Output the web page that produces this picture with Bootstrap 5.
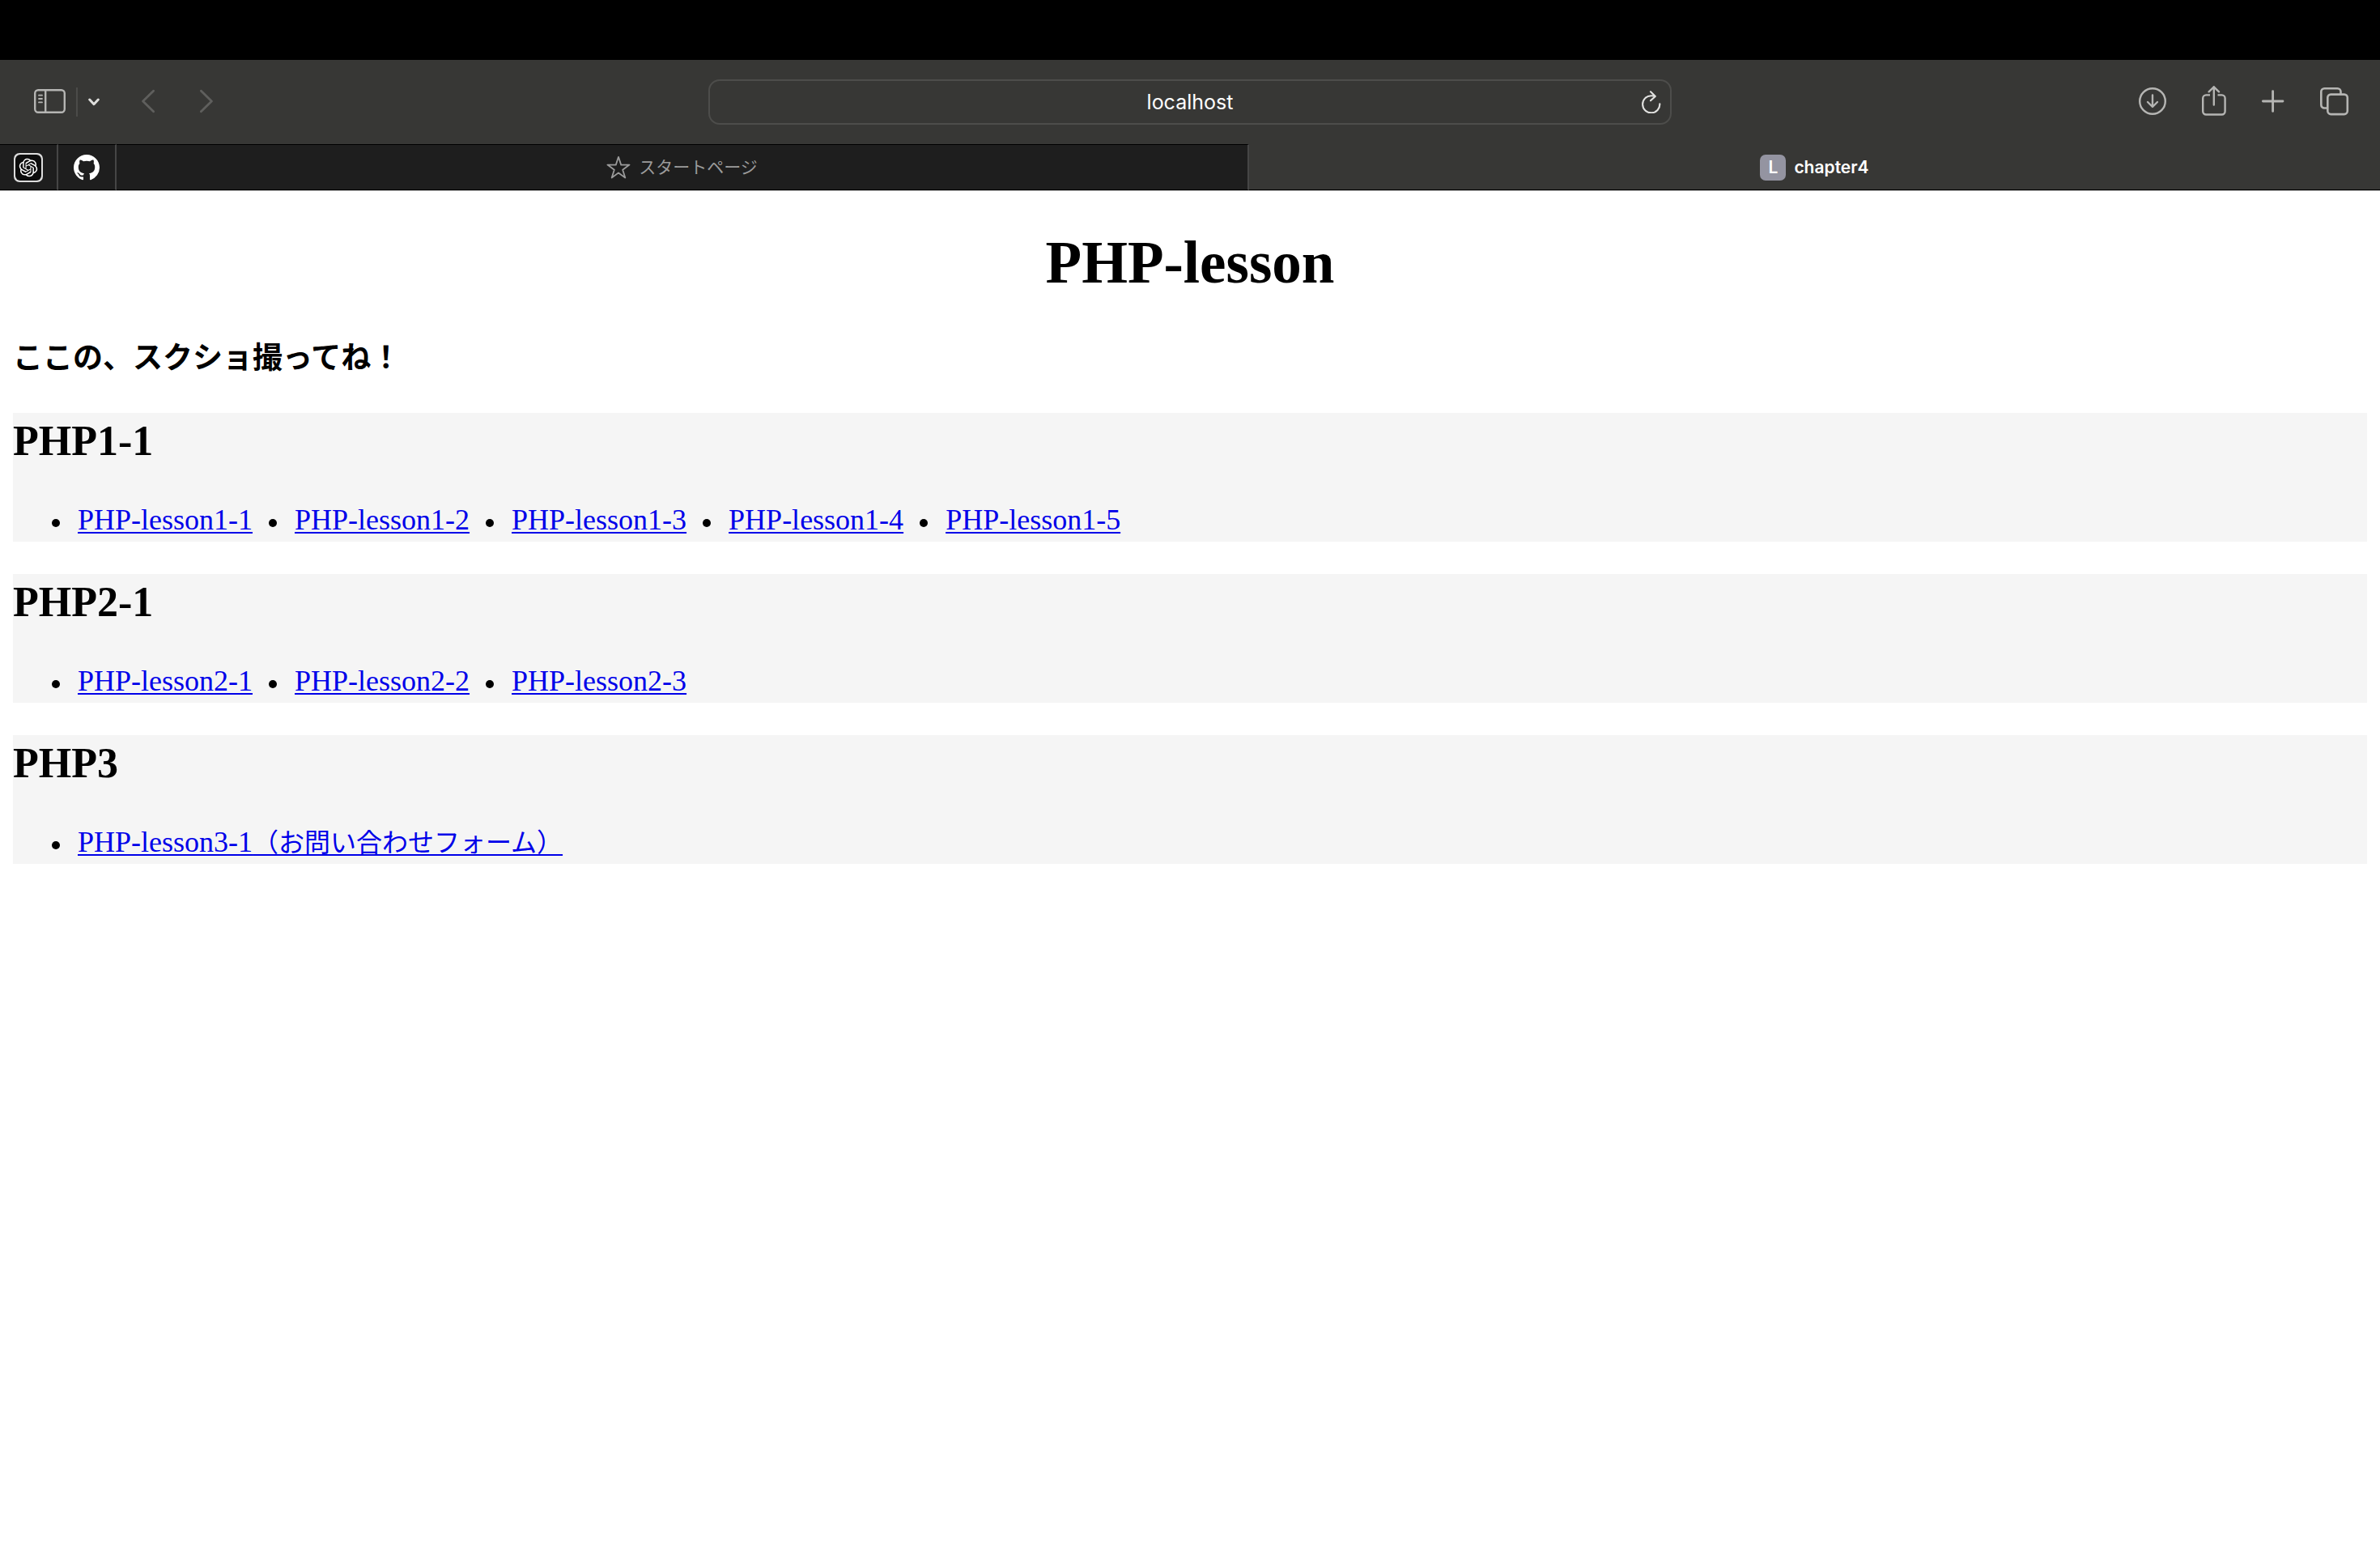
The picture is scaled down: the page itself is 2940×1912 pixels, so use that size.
<!DOCTYPE html>
<html lang="ja">
<head>
<meta charset="utf-8">
<meta name="viewport" content="width=device-width, initial-scale=1">
<title>chapter4</title>
<link href="https://cdn.jsdelivr.net/npm/bootstrap@5.3.0/dist/css/bootstrap.min.css" rel="stylesheet">
<style>
  body { font-family: Inter, "Noto Sans CJK JP", sans-serif; color: #000; }
  svg { display: block; }
  .screen-top { height: 74px; background: #000; }
  .toolbar { height: 104px; background: #373735; color: #b5b5b3; }
  .tool-side { width: 29.75%; }
  .tool-left { padding-left: 42px; }
  .tool-right { padding-right: 38px; gap: 44px; }
  .tool-split { width: 2px; height: 36px; background: #4b4b49; margin: 0 13px; }
  .tool-dim { color: #5f5f5d; }
  .tool-back { margin-left: 52px; margin-right: 56px; }
  .address { width: 40.5%; height: 56px; border: 2px solid #4d4d4b; border-radius: 14px; padding: 0 11px 0 35px; }
  .address input { color: #fff; font-size: 25px; line-height: 32px; outline: 0; min-width: 0; }
  .tabs { height: 58px; background: #373735; border-bottom: 1px solid #b8b8b8; }
  .tab-item { border-bottom: 1px solid #000; text-decoration: none; font-size: 21px; line-height: 32px; }
  .tab-idle { background: #1e1e1e; border-top: 1px solid #000; border-right: 2px solid #464646; color: #9b9b9b; }
  .tab-pinned { width: 72px; }
  .tab-wide { flex: 1 1 0; gap: 10px; }
  .tab-current { color: #fff; font-weight: 600; padding-top: 1px; }
  .site-ai { width: 36px; height: 36px; border: 2px solid #dcdcdc; border-radius: 7px; background: #dcdcdc; }
  .site-ai svg { background: #0d0d0d; border-radius: 6px; }
  .site-letter { width: 32px; height: 32px; border-radius: 7px; background: #9494a1; }
  .lesson-page { padding: 47px 16px 0; font-family: "Liberation Serif", "Noto Sans CJK JP", serif; }
  .lesson-page h1 { font-size: 73px; line-height: 84px; font-weight: 700; margin: 0 0 52px; }
  .lesson-page h3 { font-size: 37px; line-height: 48px; font-weight: 700; margin: 0 0 43px; }
  .lesson-group { background: #f5f5f5; padding: 5px 0 7px; margin-bottom: 40px; }
  .lesson-group h2 { font-size: 52px; line-height: 60px; font-weight: 700; margin: 0 0 47px; }
  .lesson-list { padding-left: 48px; column-gap: 20px; font-size: 36px; line-height: 40px; }
  .lesson-list li { display: flex; align-items: center; gap: 22px; height: 40px; }
  .lesson-list li::before { content: ""; width: 10px; height: 10px; margin-top: 8px; border-radius: 50%; background: #000; }
  .lesson-list a { color: #0000e9; text-decoration-thickness: 2px; text-underline-offset: 3px; }
  .kana { font-size: 32px; }
</style>
<script src="https://cdn.jsdelivr.net/npm/bootstrap@5.3.0/dist/js/bootstrap.bundle.min.js"></script>
</head>
<body class="bg-white">
<header>
  <div class="screen-top"></div>
  <div class="toolbar d-flex align-items-center">
    <div class="tool-side tool-left d-flex align-items-center">
      <button class="btn p-0 border-0 text-reset" type="button" aria-label="Sidebar">
        <svg width="39" height="32" viewBox="0 0 39 32" fill="none" stroke="currentColor" stroke-width="2.4" stroke-linecap="round"><rect x="1.2" y="1.2" width="36.6" height="27.6" rx="4"/><path d="M14.2 1.5v27"/><path d="M6 7.7h4M6 12h4M6 16.4h4" stroke-width="1.8"/></svg>
      </button>
      <span class="tool-split"></span>
      <button class="btn p-0 border-0 text-reset" type="button" aria-label="Tab groups">
        <svg width="14" height="10" viewBox="0 0 14 10" fill="none" stroke="#dededc" stroke-width="3" stroke-linecap="round" stroke-linejoin="round"><path d="M1.7 2l5.3 5.7L12.3 2"/></svg>
      </button>
      <button class="btn p-0 border-0 tool-dim tool-back" type="button" aria-label="Back">
        <svg width="16" height="32" viewBox="0 0 16 32" fill="none" stroke="currentColor" stroke-width="2.8" stroke-linecap="round" stroke-linejoin="round"><path d="M14.6 2.2L1.6 15l13 12.8"/></svg>
      </button>
      <button class="btn p-0 border-0 tool-dim" type="button" aria-label="Forward">
        <svg width="16" height="32" viewBox="0 0 16 32" fill="none" stroke="currentColor" stroke-width="2.8" stroke-linecap="round" stroke-linejoin="round"><path d="M1.4 2.2l13 12.8-13 12.8"/></svg>
      </button>
    </div>
    <form class="address d-flex align-items-center">
      <input class="flex-grow-1 bg-transparent border-0 p-0 text-center" type="text" value="localhost" aria-label="Address">
      <button class="btn p-0 border-0" type="button" aria-label="Reload">
        <svg width="24" height="28" viewBox="0 0 24 28" fill="none" stroke="#e2e2e0" stroke-width="2.1" stroke-linecap="round" stroke-linejoin="round"><path d="M22.3 16.2A10.6 10.6 0 1 1 11.7 6.2q2.5 0 5 .8M11 1.3l5.8 5.6L11 12.3"/></svg>
      </button>
    </form>
    <div class="tool-side tool-right d-flex align-items-center justify-content-end">
      <button class="btn p-0 border-0 text-reset" type="button" aria-label="Downloads">
        <svg width="34" height="38" viewBox="0 0 34 38" fill="none" stroke="currentColor" stroke-width="2.4" stroke-linecap="round" stroke-linejoin="round"><circle cx="17" cy="18" r="15.8"/><path d="M17 10.5v14M11 19l6 6 6-6"/></svg>
      </button>
      <button class="btn p-0 border-0 text-reset" type="button" aria-label="Share">
        <svg width="30" height="40" viewBox="0 0 30 40" fill="none" stroke="currentColor" stroke-width="2.4" stroke-linejoin="round"><path d="M10 11.4H5.2a4 4 0 0 0-4 4V31.5a4 4 0 0 0 4 4h19.4a4 4 0 0 0 4-4V15.4a4 4 0 0 0-4-4H19.5"/><path d="M14.8 23.5V1.3M8.6 7.3l6.2-6 6.2 6" stroke-linecap="round"/></svg>
      </button>
      <button class="btn p-0 border-0 text-reset" type="button" aria-label="New tab">
        <svg width="28" height="30" viewBox="0 0 28 30" fill="none" stroke="currentColor" stroke-width="2.8" stroke-linecap="round"><path d="M13.6 1.6v24.8M1.4 14h24.6"/></svg>
      </button>
      <button class="btn p-0 border-0 text-reset" type="button" aria-label="Tab overview">
        <svg width="36" height="38" viewBox="0 0 36 38" fill="none" stroke="currentColor" stroke-width="2.6"><rect x="9.3" y="9.6" width="24.5" height="24.5" rx="4"/><path d="M9.3 26.500H5.300a4 4 0 0 1-4-4V6.200a4 4 0 0 1 4-4H21.500a4 4 0 0 1 4 4V9.600"/></svg>
      </button>
    </div>
  </div>
  <nav class="tabs d-flex" aria-label="Tabs">
    <a class="tab-item tab-idle tab-pinned d-flex align-items-center justify-content-center" href="#" aria-label="ChatGPT">
      <span class="site-ai"><svg width="32" height="32" viewBox="-5 -5 34 34" fill="#fff"><path d="M22.2819 9.8211a5.9847 5.9847 0 0 0-.5157-4.9108 6.0462 6.0462 0 0 0-6.5098-2.9A6.0651 6.0651 0 0 0 4.9807 4.1818a5.9847 5.9847 0 0 0-3.9977 2.9 6.0462 6.0462 0 0 0 .7427 7.0966 5.98 5.98 0 0 0 .511 4.9107 6.051 6.051 0 0 0 6.5146 2.9001A5.9847 5.9847 0 0 0 13.2599 24a6.0557 6.0557 0 0 0 5.7718-4.2058 5.9894 5.9894 0 0 0 3.9977-2.9001 6.0557 6.0557 0 0 0-.7475-7.073zm-9.022 12.6081a4.4755 4.4755 0 0 1-2.8764-1.0408l.1419-.0804 4.7783-2.7582a.7948.7948 0 0 0 .3927-.6813v-6.7369l2.02 1.1686a.071.071 0 0 1 .038.052v5.5826a4.504 4.504 0 0 1-4.4945 4.4944zm-9.6607-4.1254a4.4708 4.4708 0 0 1-.5346-3.0137l.142.0852 4.783 2.7582a.7712.7712 0 0 0 .7806 0l5.8428-3.3685v2.3324a.0804.0804 0 0 1-.0332.0615L9.74 19.9502a4.4992 4.4992 0 0 1-6.1408-1.6464zM2.3408 7.8956a4.485 4.485 0 0 1 2.3655-1.9728V11.6a.7664.7664 0 0 0 .3879.6765l5.8144 3.3543-2.0201 1.1685a.0757.0757 0 0 1-.071 0l-4.8303-2.7865A4.504 4.504 0 0 1 2.3408 7.872zm16.5963 3.8558L13.1038 8.364 15.1192 7.2a.0757.0757 0 0 1 .071 0l4.8303 2.7913a4.4944 4.4944 0 0 1-.6765 8.1042v-5.6772a.79.79 0 0 0-.407-.667zm2.0107-3.0231l-.142-.0852-4.7735-2.7818a.7759.7759 0 0 0-.7854 0L9.409 9.2297V6.8974a.0662.0662 0 0 1 .0284-.0615l4.8303-2.7866a4.4992 4.4992 0 0 1 6.6802 4.66zM8.3065 12.863l-2.02-1.1638a.0804.0804 0 0 1-.038-.0567V6.0742a4.4992 4.4992 0 0 1 7.3757-3.4537l-.142.0805L8.704 5.459a.7948.7948 0 0 0-.3927.6813zm1.0976-2.3654l2.602-1.4998 2.6069 1.4998v2.9994l-2.5974 1.4997-2.6067-1.4997Z"/></svg></span>
    </a>
    <a class="tab-item tab-idle tab-pinned d-flex align-items-center justify-content-center" href="#" aria-label="GitHub">
      <svg width="32" height="32" viewBox="0 0 16 16" fill="#fff"><path d="M8 0C3.58 0 0 3.58 0 8c0 3.54 2.29 6.53 5.47 7.59.4.07.55-.17.55-.38 0-.19-.01-.82-.01-1.49-2.01.37-2.53-.49-2.69-.94-.09-.23-.48-.94-.82-1.13-.28-.15-.68-.52-.01-.53.63-.01 1.08.58 1.23.82.72 1.21 1.87.87 2.33.66.07-.52.28-.87.51-1.07-1.78-.2-3.64-.89-3.64-3.95 0-.87.31-1.59.82-2.15-.08-.2-.36-1.02.08-2.12 0 0 .67-.21 2.2.82.64-.18 1.32-.27 2-.27s1.36.09 2 .27c1.53-1.04 2.2-.82 2.2-.82.44 1.1.16 1.92.08 2.12.51.56.82 1.27.82 2.15 0 3.07-1.87 3.75-3.65 3.95.29.25.54.73.54 1.48 0 1.07-.01 1.93-.01 2.2 0 .21.15.46.55.38A8.01 8.01 0 0 0 16 8c0-4.42-3.58-8-8-8z"/></svg>
    </a>
    <a class="tab-item tab-idle tab-wide d-flex align-items-center justify-content-center" href="#">
      <svg width="30" height="30" viewBox="0 0 30 30" fill="none" stroke="currentColor" stroke-width="1.8" stroke-linejoin="round"><path d="M15 1.8l3.2 9.8h10.3l-8.3 6.1 3.1 9.8-8.3-6-8.3 6 3.1-9.8-8.3-6.1h10.3z"/></svg>
      <span>スタートページ</span>
    </a>
    <a class="tab-item tab-current tab-wide d-flex align-items-center justify-content-center" href="#" aria-current="page">
      <span class="site-letter d-flex align-items-center justify-content-center">L</span>
      <span>chapter4</span>
    </a>
  </nav>
</header>
<main class="lesson-page">
  <h1 class="text-center">PHP-lesson</h1>
  <h3>ここの、スクショ撮ってね！</h3>
  <section class="lesson-group">
    <h2>PHP1-1</h2>
    <ul class="lesson-list list-unstyled d-flex flex-wrap mb-0">
      <li><a href="#">PHP-lesson1-1</a></li>
      <li><a href="#">PHP-lesson1-2</a></li>
      <li><a href="#">PHP-lesson1-3</a></li>
      <li><a href="#">PHP-lesson1-4</a></li>
      <li><a href="#">PHP-lesson1-5</a></li>
    </ul>
  </section>
  <section class="lesson-group">
    <h2>PHP2-1</h2>
    <ul class="lesson-list list-unstyled d-flex flex-wrap mb-0">
      <li><a href="#">PHP-lesson2-1</a></li>
      <li><a href="#">PHP-lesson2-2</a></li>
      <li><a href="#">PHP-lesson2-3</a></li>
    </ul>
  </section>
  <section class="lesson-group">
    <h2>PHP3</h2>
    <ul class="lesson-list list-unstyled d-flex flex-wrap mb-0">
      <li><a href="#">PHP-lesson3-1<span class="kana">（お問い合わせフォーム）</span></a></li>
    </ul>
  </section>
</main>
</body>
</html>
